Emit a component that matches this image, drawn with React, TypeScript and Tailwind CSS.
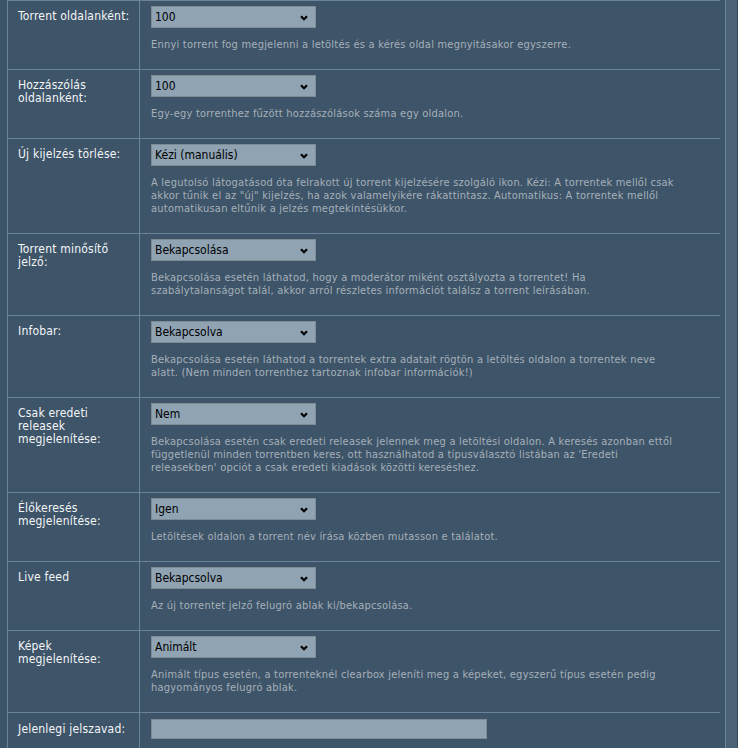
import React from "react";

type Row = {
  label: React.ReactNode;
  value: string;
  desc: string[];
};

const rows: Row[] = [
  {
    label: "Torrent oldalanként:",
    value: "100",
    desc: ["Ennyi torrent fog megjelenni a letöltés és a kérés oldal megnyitásakor egyszerre."],
  },
  {
    label: (
      <>
        Hozzászólás
        <br />
        oldalanként:
      </>
    ),
    value: "100",
    desc: ["Egy-egy torrenthez fűzött hozzászólások száma egy oldalon."],
  },
  {
    label: "Új kijelzés törlése:",
    value: "Kézi (manuális)",
    desc: [
      "A legutolsó látogatásod óta felrakott új torrent kijelzésére szolgáló ikon. Kézi: A torrentek mellől csak",
      'akkor tűnik el az "új" kijelzés, ha azok valamelyikére rákattintasz. Automatikus: A torrentek mellől',
      "automatikusan eltűnik a jelzés megtekintésükkor.",
    ],
  },
  {
    label: (
      <>
        Torrent minősítő
        <br />
        jelző:
      </>
    ),
    value: "Bekapcsolása",
    desc: [
      "Bekapcsolása esetén láthatod, hogy a moderátor miként osztályozta a torrentet! Ha",
      "szabálytalanságot talál, akkor arról részletes információt találsz a torrent leírásában.",
    ],
  },
  {
    label: "Infobar:",
    value: "Bekapcsolva",
    desc: [
      "Bekapcsolása esetén láthatod a torrentek extra adatait rögtön a letöltés oldalon a torrentek neve",
      "alatt. (Nem minden torrenthez tartoznak infobar információk!)",
    ],
  },
  {
    label: (
      <>
        Csak eredeti
        <br />
        releasek
        <br />
        megjelenítése:
      </>
    ),
    value: "Nem",
    desc: [
      "Bekapcsolása esetén csak eredeti releasek jelennek meg a letöltési oldalon. A keresés azonban ettől",
      "függetlenül minden torrentben keres, ott használhatod a típusválasztó listában az 'Eredeti",
      "releasekben' opciót a csak eredeti kiadások közötti kereséshez.",
    ],
  },
  {
    label: (
      <>
        Élőkeresés
        <br />
        megjelenítése:
      </>
    ),
    value: "Igen",
    desc: ["Letöltések oldalon a torrent név írása közben mutasson e találatot."],
  },
  {
    label: "Live feed",
    value: "Bekapcsolva",
    desc: ["Az új torrentet jelző felugró ablak ki/bekapcsolása."],
  },
  {
    label: (
      <>
        Képek
        <br />
        megjelenítése:
      </>
    ),
    value: "Animált",
    desc: [
      "Animált típus esetén, a torrenteknél clearbox jeleníti meg a képeket, egyszerű típus esetén pedig",
      "hagyományos felugró ablak.",
    ],
  },
];

const Chevron = () => (
  <svg
    width="8"
    height="6"
    viewBox="0 0 8 6"
    className="pointer-events-none absolute right-[7px] top-[8px]"
  >
    <path d="M1 1.2 L4 4.2 L7 1.2" fill="none" stroke="#000" strokeWidth="2.2" />
  </svg>
);

const FakeSelect = ({ value }: { value: string }) => (
  <div className="relative h-[22px] w-[165px] border border-[#7d8b95] bg-[#8fa3b3] pl-[3px] text-[12px] leading-[20px] text-black">
    {value}
    <Chevron />
  </div>
);

export default function App() {
  return (
    <div
      className="flex h-[748px] w-[738px] overflow-hidden bg-[#3e5468] text-[11px] leading-[13px]"
      style={{ fontFamily: '"DejaVu Sans Condensed", "DejaVu Sans", Tahoma, sans-serif' }}
    >
      <div className="w-[725px] pl-[7px]">
        <div className="w-[713px] border-l border-[#6b8398]">
          {rows.map((row, i) => (
            <div key={i} className="flex border-t border-[#6b8398]">
              <div className="w-[132px] shrink-0 border-r border-[#6b8398] pl-[10px] pt-[9px] text-[12px] leading-[13px] tracking-[0.2px] text-[#f4f6f8]">
                {row.label}
              </div>
              <div className="flex-1 pl-[11px] pt-[5px] pb-[18px]">
                <FakeSelect value={row.value} />
                <div className="mt-[10px] whitespace-nowrap tracking-[0.22px] text-[#a5b0ba]">
                  {row.desc.map((line, j) => (
                    <div key={j}>{line}</div>
                  ))}
                </div>
              </div>
            </div>
          ))}

          {/* password row */}
          <div className="flex border-t border-[#6b8398]">
            <div className="w-[132px] shrink-0 border-r border-[#6b8398] pl-[10px] pt-[10px] pb-[20px] text-[12px] leading-[13px] tracking-[0.2px] text-[#f4f6f8]">
              Jelenlegi jelszavad:
            </div>
            <div className="flex-1 pl-[11px] pt-[6px]">
              <div className="h-[20px] w-[336px] border border-[#7d8b95] bg-[#8fa3b3]" />
            </div>
          </div>
        </div>
      </div>
      <div className="w-[13px] border-l border-[#6f879b] border-r border-r-[#354a5c] bg-[#4a6176]" />
    </div>
  );
}
